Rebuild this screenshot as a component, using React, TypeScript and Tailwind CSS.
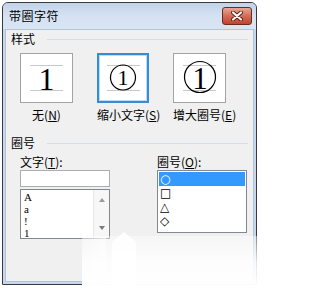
import React from 'react';

const cjk = "font-['Noto_Sans_CJK_SC',sans-serif]";

const Mnemonic: React.FC<{ label: string; k: string; tail?: string }> = ({ label, k, tail = '' }) => (
  <span className="whitespace-nowrap">
    {label}(<span className="underline underline-offset-1">{k}</span>){tail}
  </span>
);

const Guides = () => (
  <>
    <line x1="9" y1="11.5" x2="42" y2="11.5" stroke="#c9c9c9" strokeWidth="1" />
    <line x1="9" y1="36.5" x2="42" y2="36.5" stroke="#c9c9c9" strokeWidth="1" />
  </>
);

const BoxArt: React.FC<{ kind: 'none' | 'shrink' | 'grow' }> = ({ kind }) => (
  <svg width="51" height="48" viewBox="0 0 51 48" className="block">
    <Guides />
    {kind === 'none' && (
      <text x="25.5" y="36" textAnchor="middle" fontFamily="Liberation Serif, serif" fontSize="32" fill="#000">
        1
      </text>
    )}
    {kind === 'shrink' && (
      <>
        <circle cx="25" cy="23.5" r="12.5" fill="none" stroke="#000" strokeWidth="1.2" />
        <text x="25" y="31" textAnchor="middle" fontFamily="Liberation Serif, serif" fontSize="22" fill="#000">
          1
        </text>
      </>
    )}
    {kind === 'grow' && (
      <>
        <circle cx="26" cy="23" r="15.5" fill="none" stroke="#000" strokeWidth="1.2" />
        <text x="26" y="35" textAnchor="middle" fontFamily="Liberation Serif, serif" fontSize="31" fill="#000">
          1
        </text>
      </>
    )}
  </svg>
);

const SectionHeader: React.FC<{ title: string }> = ({ title }) => (
  <div className="flex items-center h-[14px] pl-[5px] pr-[5px]">
    <span className="text-[12px] leading-[14px]">{title}</span>
    <div className="flex-1 ml-[12px] border-t border-[#d5dde6]" />
  </div>
);

const symbols = ['○', '□', '△', '◇'];
const chars = ['A', 'a', '!', '1'];

export default function App() {
  return (
    <div className={`relative w-[259px] h-[288px] bg-white overflow-hidden pt-[2px] pl-[2px] text-black ${cjk}`}>
      <div className="w-[255px] h-[283px] flex flex-col border border-[#3a3a3a] rounded-t-[6px] bg-[#c8d8ec]">
        {/* title bar */}
        <div className="h-[26px] flex items-center justify-between pl-[6px] pr-[4px] rounded-t-[5px] bg-linear-to-b from-[#c2d3e9] via-[#d5e2f1] to-[#d9e5f3]">
          <span className="text-[12px] leading-[14px] tracking-[0.5px]">带圈字符</span>
          <div className="w-[30px] h-[18px] rounded-[3px] border border-[#6e2a20] bg-linear-to-b from-[#e9a797] via-[#d26c58] to-[#c2432f] flex items-center justify-center">
            <svg width="12" height="10" viewBox="0 0 12 10">
              <path d="M2 1.5 L10 8.5 M10 1.5 L2 8.5" stroke="#5b1b12" strokeWidth="4" strokeLinecap="round" />
              <path d="M2 1.5 L10 8.5 M10 1.5 L2 8.5" stroke="#fff" strokeWidth="2.2" strokeLinecap="round" />
            </svg>
          </div>
        </div>

        {/* client area */}
        <div className="flex-1 mx-[2px] mb-[2px] bg-[#f0f0f0] border border-[#b4c4d8] flex flex-col">
          <div className="mt-[2px]">
            <SectionHeader title="样式" />
          </div>

          <div className="flex pl-[14px] gap-[24px] mt-[7px]">
            <div className="flex flex-col">
              <div className="w-[53px] h-[50px] bg-white border border-[#a3a3a3]">
                <BoxArt kind="none" />
              </div>
              <div className="mt-[5px] text-[12px] leading-[13px] text-center">
                <Mnemonic label="无" k="N" />
              </div>
            </div>
            <div className="flex flex-col">
              <div className="w-[52px] h-[50px] bg-white border border-[#3a8bd6] shadow-[inset_0_0_0_1px_#3a8bd6,inset_0_0_0_2px_#b9dcf7]">
                <BoxArt kind="shrink" />
              </div>
              <div className="mt-[5px] text-[12px] leading-[13px] w-[52px] overflow-visible">
                <Mnemonic label="缩小文字" k="S" />
              </div>
            </div>
            <div className="flex flex-col">
              <div className="w-[53px] h-[50px] bg-white border border-[#a3a3a3]">
                <BoxArt kind="grow" />
              </div>
              <div className="mt-[5px] text-[12px] leading-[13px] w-[53px] overflow-visible">
                <Mnemonic label="增大圈号" k="E" />
              </div>
            </div>
          </div>

          <div className="mt-[15px]">
            <SectionHeader title="圈号" />
          </div>

          <div className="flex pl-[14px] gap-[47px] mt-[6px]">
            {/* text column */}
            <div className="flex flex-col w-[90px]">
              <div className="text-[12px] leading-[12px]">
                <Mnemonic label="文字" k="T" tail=":" />
              </div>
              <div className="mt-[2px] h-[17px] bg-white border border-[#abadb3]" />
              <div className="mt-[2px] h-[50px] bg-white border border-[#828790] flex">
                <div className="flex-1 pl-[3px] pt-[1px] font-['Liberation_Serif',serif] text-[11px]">
                  {chars.map((c) => (
                    <div key={c} className="h-[12px] flex items-center">
                      <span className="leading-none">{c}</span>
                    </div>
                  ))}
                </div>
                <div className="w-[16px] bg-[#f7f7f7] border-l border-[#e8e8e8] flex flex-col items-center justify-between py-[8px]">
                  <svg width="6" height="4" viewBox="0 0 6 4">
                    <path d="M0 4 L3 0 L6 4 Z" fill="#9a9a9a" />
                  </svg>
                  <svg width="6" height="4" viewBox="0 0 6 4">
                    <path d="M0 0 L6 0 L3 4 Z" fill="#7a7a7a" />
                  </svg>
                </div>
              </div>
            </div>

            {/* enclosure column */}
            <div className="flex flex-col w-[90px]">
              <div className="text-[12px] leading-[12px]">
                <Mnemonic label="圈号" k="O" tail=":" />
              </div>
              <div className="mt-[2px] h-[63px] bg-white border border-[#828790] p-[1px] font-['DejaVu_Sans',sans-serif] text-[12px] leading-[14px]">
                {symbols.map((s, i) => (
                  <div
                    key={s}
                    className={`h-[14px] pl-[1px] flex items-center ${i === 0 ? 'bg-[#3399ff] text-white' : ''}`}
                  >
                    <span className="leading-none">{s}</span>
                  </div>
                ))}
              </div>
            </div>
          </div>
        </div>
      </div>

      {/* washed-out watermark over the lower right corner */}
      <div className="absolute left-[82px] top-[236px] right-0 bottom-0 bg-linear-to-b from-white/40 via-white/85 to-white" />
      <div className="absolute left-[82px] top-[236px] w-[24px] bottom-0 bg-linear-to-r from-white/0 to-white/60" />
      <div className="absolute left-[112px] top-[232px] w-[24px] h-[56px] bg-white/90 [clip-path:polygon(50%_0,100%_18%,100%_100%,0_100%,0_18%)]" />
    </div>
  );
}
